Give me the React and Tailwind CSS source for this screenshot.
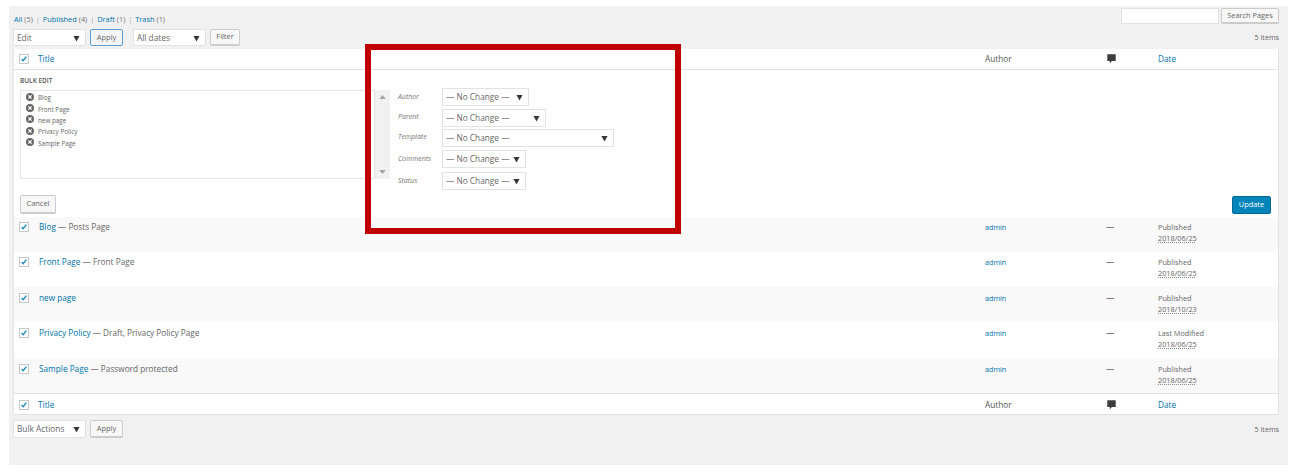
const font = "[font-family:'Open_Sans',sans-serif]";

const pages = [
  { title: 'Blog', note: ' — Posts Page', status: 'Published', date: '2018/06/25', bg: 'bg-[#f9f9f9]', box: 'h-[35px] pt-[4px]' },
  { title: 'Front Page', note: ' — Front Page', status: 'Published', date: '2018/06/25', bg: 'bg-white', box: 'h-[35px] pt-[4px]' },
  { title: 'new page', note: '', status: 'Published', date: '2018/10/23', bg: 'bg-[#f9f9f9]', box: 'h-[35px] pt-[5px]' },
  { title: 'Privacy Policy', note: ' — Draft, Privacy Policy Page', status: 'Last Modified', date: '2018/06/25', bg: 'bg-white', box: 'h-[36px] pt-[5px]' },
  { title: 'Sample Page', note: ' — Password protected', status: 'Published', date: '2018/06/25', bg: 'bg-[#f9f9f9]', box: 'h-[35px] pt-[5px]' },
];

const bulkFields = [
  { label: 'Author', width: 'w-[87px]', gap: 'mb-[3px]', pad: 'pt-[4px]' },
  { label: 'Parent', width: 'w-[104px]', gap: 'mb-[2px]', pad: 'pt-[3px]' },
  { label: 'Template', width: 'w-[172px]', gap: 'mb-[3px]', pad: 'pt-[3px]' },
  { label: 'Comments', width: 'w-[84px]', gap: 'mb-[4px]', pad: 'pt-[4px]' },
  { label: 'Status', width: 'w-[84px]', gap: '', pad: 'pt-[4px]' },
];

function Caret({ className = '' }) {
  return (
    <svg viewBox="0 0 8 8" className={`w-[7px] h-[7px] shrink-0 ${className}`}>
      <path d="M0.5 1h7L4 7.5z" fill="#32373c" />
    </svg>
  );
}

function Select({ children, className = '' }) {
  return (
    <div className={`flex items-center justify-between bg-white border border-[#e2e2e2] pl-[3px] pr-[5px] text-[8.3px] text-[#666] ${className}`}>
      <span className="whitespace-nowrap">{children}</span>
      <Caret />
    </div>
  );
}

function Button({ children, className = '' }) {
  return (
    <button className={`flex items-center justify-center rounded-[2px] border bg-[#f7f7f7] text-[7.4px] text-[#666] border-[#cccccc] border-b-[2px] ${className}`}>
      {children}
    </button>
  );
}

function Checkbox() {
  return (
    <span className="flex w-[10px] h-[10px] items-center justify-center bg-white border border-[#c5c8cb]">
      <svg viewBox="0 0 10 10" className="w-[10px] h-[10px]">
        <path d="M2 5l2 2.2L8 2" fill="none" stroke="#1e8cbe" strokeWidth="1.7" />
      </svg>
    </span>
  );
}

function CommentIcon() {
  return (
    <svg viewBox="0 0 9 10" className="w-[9px] h-[10px]">
      <path d="M0.3 0.3h8.4v6.7H4.8L2.9 9.6V7H0.3z" fill="#3c3c3c" />
    </svg>
  );
}

function RemoveIcon() {
  return (
    <svg viewBox="0 0 8 8" className="mt-[-3px] w-[8px] h-[8px] shrink-0">
      <circle cx="4" cy="4" r="4" fill="#666" />
      <path d="M2.4 2.4l3.2 3.2M5.6 2.4L2.4 5.6" stroke="#fff" strokeWidth="1.2" />
    </svg>
  );
}

function HeadRow({ className = '' }) {
  return (
    <div className={`grid grid-cols-[24px_947px_121px_52px_1fr] items-center bg-white text-[8.25px] ${className}`}>
      <div className="pl-[5px]"><Checkbox /></div>
      <a className="text-[#0073aa]">Title</a>
      <span className="text-[#555]">Author</span>
      <div className="pl-[1px] mt-[-1px]"><CommentIcon /></div>
      <a className="text-[#0073aa]">Date</a>
    </div>
  );
}

function PageRow({ page }) {
  return (
    <div className={`grid grid-cols-[24px_947px_121px_52px_1fr] text-[8.25px] leading-[12px] ${page.box} ${page.bg}`}>
      <div className="pl-[5px] pt-[1px]"><Checkbox /></div>
      <div className="text-[#666] pl-[1px]">
        <a className="text-[#0073aa]">{page.title}</a>{page.note}
      </div>
      <a className="text-[#0073aa] text-[7.2px]">admin</a>
      <span className="text-[#555]">—</span>
      <div className="text-[7.3px] text-[#666]">
        <div>{page.status}</div>
        <div className="mt-[-0.5px] w-fit leading-[11px] underline decoration-dotted decoration-[#888]">{page.date}</div>
      </div>
    </div>
  );
}

export default function App() {
  return (
    <div className={`relative h-[475px] w-[1297px] overflow-hidden bg-white pl-[9px] pt-[6px] ${font}`}>
      <div className="h-[459px] w-[1279px] bg-[#f1f1f1] pl-[4px] pr-[9px] pt-[2px]">
        {/* top links + search */}
        <div className="flex h-[16px] items-center justify-between">
          <div className="pl-[1px] pt-[7px] text-[7.4px] text-[#777]">
            <a className="text-[#0073aa]">All</a> (5) <span className="text-[#aaa] mx-[1px]">|</span>{' '}
            <a className="text-[#0073aa]">Published</a> (4) <span className="text-[#aaa] mx-[1px]">|</span>{' '}
            <a className="text-[#0073aa]">Draft</a> (1) <span className="text-[#aaa] mx-[1px]">|</span>{' '}
            <a className="text-[#0073aa]">Trash</a> (1)
          </div>
          <div className="flex gap-[2px]">
            <div className="h-[16px] w-[98px] border border-[#e2e2e2] bg-white" />
            <Button className="h-[16px] w-[58px]">Search Pages</Button>
          </div>
        </div>

        {/* filters */}
        <div className="mt-[5px] flex h-[17px] items-center">
          <Select className="h-[17px] w-[73px] pt-[1px]">Edit</Select>
          <Button className="ml-[4px] h-[17px] w-[33px] !border-[#5b9dd9] !border-b !bg-[#f5f5f5]">Apply</Button>
          <Select className="ml-[10px] h-[17px] w-[73px] pt-[1px]">All dates</Select>
          <Button className="ml-[4px] h-[17px] w-[30px]">Filter</Button>
          <span className="ml-auto text-[7.2px] text-[#666]">5 items</span>
        </div>

        {/* table */}
        <div className="mt-[3px] border-r border-l border-[#e5e5e5] bg-white">
          <HeadRow className="h-[21px] border-b border-[#e1e1e1]" />

          {/* bulk edit row */}
          <div className="relative h-[147px] bg-white px-[6px] pt-[6px]">
            <div className="text-[6.5px] font-semibold leading-[10px] text-[#555]">BULK EDIT</div>
            <div className="mt-[4px] flex items-start">
              <div className="flex h-[89px] w-[355px] flex-col gap-[3.4px] border border-[#e4e4e4] pl-[5px] pt-[3px]">
                {pages.map((page) => (
                  <div key={page.title} className="flex h-[8px] items-center gap-[4px] text-[6.3px] text-[#666]">
                    <RemoveIcon />
                    <span>{page.title}</span>
                  </div>
                ))}
              </div>
              <div className="flex h-[89px] w-[15px] flex-col items-center justify-between bg-[#f1f1f1] py-[5px]">
                <svg viewBox="0 0 8 5" className="w-[7px] h-[4px]"><path d="M0 5L4 0l4 5z" fill="#a3a3a3" /></svg>
                <svg viewBox="0 0 8 5" className="w-[7px] h-[4px]"><path d="M0 0h8L4 5z" fill="#a3a3a3" /></svg>
              </div>
              <div className="ml-[8px] mt-[-2px] flex flex-col">
                {bulkFields.map((field) => (
                  <div key={field.label} className={`flex h-[18px] ${field.gap} items-start`}>
                    <span className={`w-[44px] ${field.pad} text-[7px] italic leading-[10px] text-[#777]`}>{field.label}</span>
                    <Select className={`${field.width} h-[18px]`}>— No Change —</Select>
                  </div>
                ))}
              </div>
            </div>
            <div className="absolute inset-x-[6px] bottom-[3px] flex items-center justify-between pr-[1px]">
              <Button className="h-[19px] w-[36px]">Cancel</Button>
              <button className="h-[18px] w-[39px] rounded-[2px] border border-[#006799] bg-[#0085ba] text-[7.4px] text-white">
                Update
              </button>
            </div>
          </div>

          {pages.map((page) => (
            <PageRow key={page.title} page={page} />
          ))}

          <HeadRow className="h-[22px] border-t border-b border-[#e1e1e1] pt-[2px]" />
        </div>

        {/* bottom actions */}
        <div className="mt-[5px] flex h-[18px] items-center">
          <Select className="h-[18px] w-[73px] pt-[1px]">Bulk Actions</Select>
          <Button className="ml-[4px] h-[18px] w-[33px] pt-[1px]">Apply</Button>
          <span className="ml-auto text-[7.2px] text-[#666]">5 items</span>
        </div>
      </div>

      {/* red callout drawn on top of the screenshot */}
      <div className="absolute left-[365px] top-[44px] h-[190px] w-[316px] border-[6px] border-[#c00000]" />
    </div>
  );
}
